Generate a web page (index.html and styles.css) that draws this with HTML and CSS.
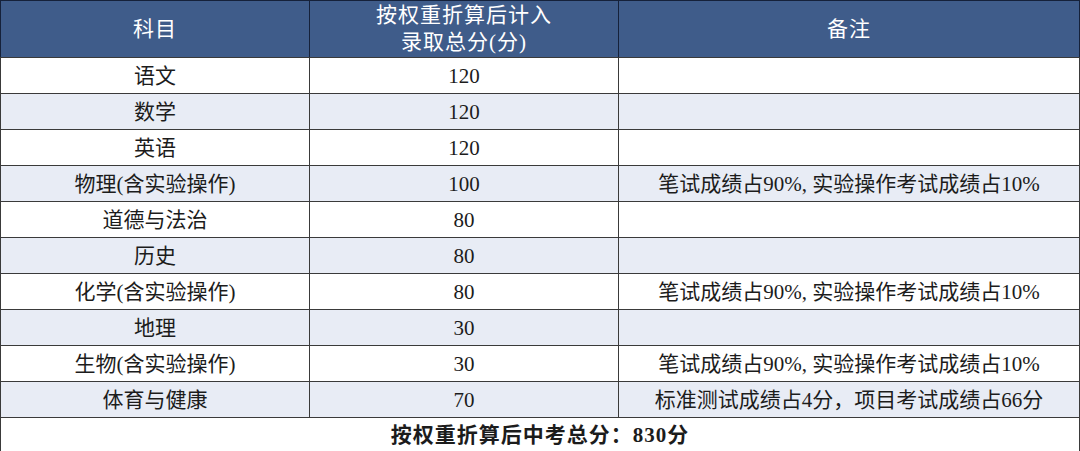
FILE: index.html
```html
<!DOCTYPE html>
<html lang="zh">
<head>
<meta charset="utf-8">
<link rel="stylesheet" href="styles.css">
</head>
<body>
<table class="score-table">
  <colgroup>
    <col class="c1"><col class="c2"><col class="c3">
  </colgroup>
  <thead>
    <tr class="head">
      <th>科目</th>
      <th>按权重折算后计入<br>录取总分(分)</th>
      <th>备注</th>
    </tr>
  </thead>
  <tbody>
    <tr><td>语文</td><td>120</td><td></td></tr>
    <tr class="alt"><td>数学</td><td>120</td><td></td></tr>
    <tr><td>英语</td><td>120</td><td></td></tr>
    <tr class="alt"><td>物理(含实验操作)</td><td>100</td><td>笔试成绩占90%, 实验操作考试成绩占10%</td></tr>
    <tr><td>道德与法治</td><td>80</td><td></td></tr>
    <tr class="alt"><td>历史</td><td>80</td><td></td></tr>
    <tr><td>化学(含实验操作)</td><td>80</td><td>笔试成绩占90%, 实验操作考试成绩占10%</td></tr>
    <tr class="alt"><td>地理</td><td>30</td><td></td></tr>
    <tr><td>生物(含实验操作)</td><td>30</td><td>笔试成绩占90%, 实验操作考试成绩占10%</td></tr>
    <tr class="alt"><td>体育与健康</td><td>70</td><td>标准测试成绩占4分，项目考试成绩占66分</td></tr>
    <tr class="total"><td colspan="3">按权重折算后中考总分：830分</td></tr>
  </tbody>
</table>
</body>
</html>
```
FILE: styles.css
```css
html, body {
  margin: 0;
  padding: 0;
  background: #ffffff;
}
body {
  font-family: "Liberation Serif", "Noto Sans CJK SC", serif;
  color: #1c1c1c;
}
.score-table {
  border-collapse: collapse;
  width: 1079px;
  table-layout: fixed;
  border-bottom: 2px solid #9a9a9a;
}
.c1 { width: 309px; }
.c2 { width: 309px; }
.c3 { width: 461px; }
.score-table th,
.score-table td {
  border: 1px solid #3a3a3a;
  text-align: center;
  vertical-align: middle;
  padding: 0;
  font-size: 21px;
  font-weight: normal;
  height: 35px;
  line-height: 24px;
}
.head th {
  background: #3f5c8a;
  color: #ffffff;
  height: 56px;
  line-height: 27px;
  font-size: 21px;
  letter-spacing: 1px;
  border-top: 1px solid #15213a;
  border-left-color: #15213a;
  border-right-color: #15213a;
}
.alt td {
  background: #e8ecf5;
}
.total td {
  font-weight: bold;
  letter-spacing: 1px;
  height: 34px;
  border-bottom: 2px solid #9a9a9a;
}
```
